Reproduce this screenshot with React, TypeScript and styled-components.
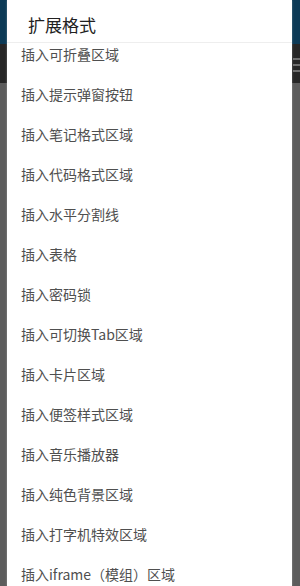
import { useEffect, useRef } from "react";
import styled, { createGlobalStyle } from "styled-components";

const items: string[] = [
    "插入可折叠区域",
    "插入提示弹窗按钮",
    "插入笔记格式区域",
    "插入代码格式区域",
    "插入水平分割线",
    "插入表格",
    "插入密码锁",
    "插入可切换Tab区域",
    "插入卡片区域",
    "插入便签样式区域",
    "插入音乐播放器",
    "插入纯色背景区域",
    "插入打字机特效区域",
    "插入iframe（模组）区域",
];

export default function App(){
    const listRef = useRef<HTMLUListElement>(null);

    useEffect(() => {
        if(listRef.current) listRef.current.scrollTop = 9;
    }, []);

    return(
        <>
            <GlobalStyle />
            <Page>
                <TopBar />
                <ToolBar>
                    <MenuIcon>
                        <span />
                        <span />
                        <span />
                    </MenuIcon>
                </ToolBar>
                <Content />

                <Dialog>
                    <Title>扩展格式</Title>
                    <List ref={listRef}>
                        {items.map((item) => (
                            <Item key={item}>{item}</Item>
                        ))}
                    </List>
                </Dialog>
            </Page>
        </>
    )
}

const GlobalStyle = createGlobalStyle`
    html, body {
        margin: 0;
        padding: 0;
        height: 100%;
        overflow: hidden;
    }
    body {
        font-family: "Noto Sans CJK SC", "Noto Sans", sans-serif;
    }
    #root {
        height: 100%;
    }
`
const Page = styled.div`
    position: relative;
    width: 300px;
    height: 586px;
    display: flex;
    flex-direction: column;
    background: #5c5c5c;
    overflow: hidden;
`
const TopBar = styled.div`
    height: 44px;
    background: #0c3a56;
`
const ToolBar = styled.div`
    height: 39px;
    background: #262626;
    display: flex;
    justify-content: flex-end;
    align-items: center;
`
const MenuIcon = styled.div`
    width: 7px;
    display: flex;
    flex-direction: column;
    gap: 4px;
    margin-top: 2px;

    span {
        display: block;
        height: 2px;
        background: #6e6e6e;
    }
`
const Content = styled.div`
    flex: 1;
`
const Dialog = styled.div`
    position: absolute;
    top: 0;
    left: 7px;
    width: 285px;
    bottom: 0;
    background: #fff;
    box-shadow: 0 0 2px rgba(255, 255, 255, 0.35);
    display: flex;
    flex-direction: column;
`
const Title = styled.h2`
    margin: 0;
    height: 43px;
    padding: 7px 21px 0;
    display: flex;
    align-items: center;
    font-size: 17px;
    font-weight: 400;
    color: #212121;
    border-bottom: 1px solid #eeeeee;
    box-sizing: border-box;
`
const List = styled.ul`
    list-style: none;
    margin: 0;
    padding: 0;
    flex: 1;
    overflow: hidden;
`
const Item = styled.li`
    height: 40px;
    padding: 0 14px;
    display: flex;
    align-items: center;
    font-size: 14px;
    color: #4f4f4f;
`
